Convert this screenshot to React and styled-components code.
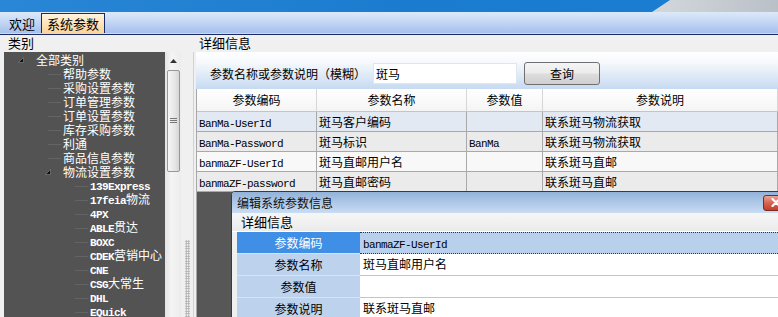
import React from "react";
import styled, { createGlobalStyle } from "styled-components";

const GlobalStyle = createGlobalStyle`
  html, body { margin: 0; padding: 0; }
  body {
    background: #f0f0f0;
    font-family: "Noto Sans CJK SC", "Noto Sans", sans-serif;
    font-size: 12px;
    color: #000;
    overflow: hidden;
  }
`;

const Latin = styled.span`
  font-family: "Liberation Mono", monospace;
  font-size: 11px;
  letter-spacing: -0.6px;
  font-weight: ${({ $bold }) => ($bold ? 700 : 400)};
`;

// split ascii runs so they get the narrow monospaced face
const Txt = ({ children, bold }) =>
  String(children)
    .split(/([\x21-\x7e]+)/)
    .map((part, i) =>
      /^[\x21-\x7e]+$/.test(part) ? (
        <Latin key={i} $bold={bold}>
          {part}
        </Latin>
      ) : (
        part
      )
    );

const tree = [
  { label: "全部类别", level: 0, open: true },
  { label: "帮助参数", level: 1 },
  { label: "采购设置参数", level: 1 },
  { label: "订单管理参数", level: 1 },
  { label: "订单设置参数", level: 1 },
  { label: "库存采购参数", level: 1 },
  { label: "利通", level: 1 },
  { label: "商品信息参数", level: 1 },
  { label: "物流设置参数", level: 1, open: true },
  { label: "139Express", level: 2 },
  { label: "17feia物流", level: 2 },
  { label: "4PX", level: 2 },
  { label: "ABLE贯达", level: 2 },
  { label: "BOXC", level: 2 },
  { label: "CDEK营销中心", level: 2 },
  { label: "CNE", level: 2 },
  { label: "CSG大常生", level: 2 },
  { label: "DHL", level: 2 },
  { label: "EQuick", level: 2 },
];

const rows = [
  { code: "BanMa-UserId", name: "斑马客户编码", value: "", desc: "联系斑马物流获取", bg: "#e2e9f3" },
  { code: "BanMa-Password", name: "斑马标识", value: "BanMa", desc: "联系斑马物流获取", bg: "#ebebeb" },
  { code: "banmaZF-UserId", name: "斑马直邮用户名", value: "", desc: "联系斑马直邮", bg: "#f8f8f8" },
  { code: "banmaZF-password", name: "斑马直邮密码", value: "", desc: "联系斑马直邮", bg: "#ebebeb" },
];

const props = [
  { label: "参数编码", value: "banmaZF-UserId", selected: true },
  { label: "参数名称", value: "斑马直邮用户名" },
  { label: "参数值", value: "" },
  { label: "参数说明", value: "联系斑马直邮" },
];

const App = () => {
  return (
    <Page>
      <GlobalStyle />
      <Banner>
        <BannerBlue />
        <BannerGray />
      </Banner>
      <TabBar>
        <Tab>欢迎</Tab>
        <Tab $active>系统参数</Tab>
      </TabBar>
      <Body>
        <LeftCol>
          <SectionLabel>类别</SectionLabel>
          <TreeWrap>
            <Tree>
              {tree.map((t, i) => (
                <TreeRow key={i} $level={t.level}>
                  <Toggle>
                    {t.open ? (
                      <svg width="6" height="6" viewBox="0 0 6 6">
                        <polygon
                          points="5.5,0.5 5.5,5.5 0.5,5.5"
                          fill="#111"
                          stroke="#8a8a8a"
                          strokeWidth="0.6"
                        />
                      </svg>
                    ) : (
                      <Connector />
                    )}
                  </Toggle>
                  <TreeText>
                    <Txt bold>{t.label}</Txt>
                  </TreeText>
                </TreeRow>
              ))}
            </Tree>
            <Scrollbar>
              <svg width="7" height="4" viewBox="0 0 7 4">
                <polygon points="3.5,0 7,4 0,4" fill="#333" />
              </svg>
              <Thumb>
                <svg width="7" height="6" viewBox="0 0 7 6">
                  <path d="M0 0.5h7M0 2.5h7M0 4.5h7" stroke="#777" strokeWidth="1" />
                </svg>
              </Thumb>
            </Scrollbar>
          </TreeWrap>
        </LeftCol>
        <Splitter>
          <Grip />
        </Splitter>
        <RightCol>
          <SectionLabel>详细信息</SectionLabel>
          <Panel>
            <Content>
              <SearchBar>
                <SearchLabel>参数名称或参数说明（模糊）</SearchLabel>
                <SearchInput readOnly value="斑马" />
                <SearchButton>查询</SearchButton>
              </SearchBar>
              <Grid>
                <GridRow $header>
                  <HeadCell>参数编码</HeadCell>
                  <HeadCell>参数名称</HeadCell>
                  <HeadCell>参数值</HeadCell>
                  <HeadCell>参数说明</HeadCell>
                </GridRow>
                {rows.map((r, i) => (
                  <GridRow key={i} style={{ background: r.bg }}>
                    <Cell><Txt>{r.code}</Txt></Cell>
                    <Cell><Txt>{r.name}</Txt></Cell>
                    <Cell><Txt>{r.value}</Txt></Cell>
                    <Cell><Txt>{r.desc}</Txt></Cell>
                  </GridRow>
                ))}
              </Grid>
              <GridEmpty />
              <Dialog>
                <TitleBar>
                  <Title>编辑系统参数信息</Title>
                  <CloseButton>
                    <svg width="10" height="9" viewBox="0 0 10 9">
                      <path d="M1.5 1l7 7M8.5 1l-7 7" stroke="#fff" strokeWidth="2.2" strokeLinecap="round" />
                    </svg>
                  </CloseButton>
                </TitleBar>
                <GroupLabel>详细信息</GroupLabel>
                <PropGrid>
                  {props.map((p, i) => (
                    <PropRow key={i}>
                      <PropLabel $selected={p.selected}>{p.label}</PropLabel>
                      <PropValue $selected={p.selected}>
                        <Txt>{p.value}</Txt>
                      </PropValue>
                    </PropRow>
                  ))}
                </PropGrid>
              </Dialog>
            </Content>
          </Panel>
        </RightCol>
      </Body>
    </Page>
  );
};

const Page = styled.div`
  width: 778px;
  height: 317px;
  display: flex;
  flex-direction: column;
  overflow: hidden;
`;

const Banner = styled.div`
  height: 12px;
  display: flex;
  flex-shrink: 0;
`;
const BannerBlue = styled.div`
  flex: 1;
  background: linear-gradient(90deg, #2a86d6, #1b7ccf 60%, #1a7dd2);
  margin-right: -18px;
  clip-path: polygon(0 0, 100% 0, calc(100% - 18px) 100%, 0 100%);
  position: relative;
  z-index: 1;
`;
const BannerGray = styled.div`
  width: 126px;
  background: linear-gradient(90deg, #d4d8dc, #b9c0c7);
`;

const TabBar = styled.div`
  height: 21px;
  flex-shrink: 0;
  display: flex;
  align-items: flex-end;
  padding-left: 4px;
  background: linear-gradient(#dde9fa, #c2d6f4 50%, #a5c0ec);
  border-bottom: 1px solid #f4d6a6;
  box-shadow: 0 1px 0 #1b2a66;
  margin-bottom: 1px;
`;
const Tab = styled.div`
  height: 19px;
  line-height: 19px;
  padding: 0 5px;
  margin-right: 1px;
  font-size: 13px;
  box-sizing: border-box;
  ${({ $active }) =>
    $active &&
    `
    height: 20px;
    border: 1px solid #1b2a66;
    border-bottom: none;
    background: linear-gradient(#fff3de, #fde3b8 55%, #fbd49a);
  `}
`;

const Body = styled.div`
  flex: 1;
  display: flex;
  min-height: 0;
`;

const LeftCol = styled.div`
  width: 183px;
  display: flex;
  flex-direction: column;
`;
const SectionLabel = styled.div`
  height: 17px;
  line-height: 15px;
  padding-left: 8px;
  font-size: 13px;
  flex-shrink: 0;
`;
const TreeWrap = styled.div`
  flex: 1;
  display: flex;
  margin-left: 4px;
  width: 177px;
  min-height: 0;
`;
const Tree = styled.div`
  flex: 1;
  background: #535353;
  overflow: hidden;
  color: #fff;
  padding-top: 1px;
`;
const TreeRow = styled.div`
  height: 14px;
  display: flex;
  align-items: center;
  padding-left: ${({ $level }) => $level * 27 + 14}px;
  white-space: nowrap;
`;
const Toggle = styled.div`
  width: 18px;
  height: 14px;
  display: flex;
  align-items: center;
  flex-shrink: 0;
`;
const Connector = styled.div`
  margin-left: 3px;
  width: 13px;
  border-top: 1px solid #646464;
`;
const TreeText = styled.span`
  line-height: 14px;
  font-size: 12px;
`;

const Scrollbar = styled.div`
  width: 16px;
  background: linear-gradient(90deg, #e4e4e4, #f4f4f4 40%, #ececec);
  display: flex;
  flex-direction: column;
  align-items: center;
  padding-top: 7px;
  box-sizing: border-box;
`;
const Thumb = styled.div`
  margin-top: 7px;
  width: 13px;
  height: 102px;
  box-sizing: border-box;
  border: 1px solid #979797;
  border-radius: 2px;
  background: linear-gradient(90deg, #f6f6f6, #e6e6e6 60%, #d6d6d6);
  display: flex;
  align-items: center;
  justify-content: center;
`;

const Splitter = styled.div`
  width: 8px;
  display: flex;
  flex-direction: column;
  padding: 205px 1px 0 2px;
  box-sizing: border-box;
`;
const Grip = styled.div`
  flex: 1;
  background: radial-gradient(circle, #a8a8a8 0.8px, transparent 1.1px) 0 0 / 2.5px 2.5px;
`;

const RightCol = styled.div`
  flex: 1;
  display: flex;
  flex-direction: column;
  min-width: 0;
`;
const Panel = styled.div`
  flex: 1;
  display: flex;
  margin-left: 2px;
  border-left: 1px solid #d2d2d2;
  padding-left: 2px;
  min-height: 0;
`;
const Content = styled.div`
  flex: 1;
  position: relative;
  display: flex;
  flex-direction: column;
  min-width: 0;
`;

const SearchBar = styled.div`
  height: 37px;
  flex-shrink: 0;
  display: flex;
  align-items: center;
  padding: 6px 0 0 14px;
  box-sizing: border-box;
  background: linear-gradient(#ffffff, #f5f8fc 30%, #c6daf1);
`;
const SearchLabel = styled.span`
  font-size: 12px;
  width: 163px;
  white-space: nowrap;
`;
const SearchInput = styled.input`
  width: 144px;
  height: 21px;
  box-sizing: border-box;
  border: 1px solid #dfe6ee;
  padding: 0 2px;
  font-family: "Noto Sans CJK SC", sans-serif;
  font-size: 12px;
  background: #fff;
  outline: none;
`;
const SearchButton = styled.button`
  margin-left: 7px;
  width: 76px;
  height: 23px;
  border: 1px solid #707070;
  border-radius: 3px;
  background: linear-gradient(#f4f4f4, #ececec 48%, #dddddd 52%, #cfcfcf);
  font-family: "Noto Sans CJK SC", sans-serif;
  font-size: 12px;
  padding: 0;
`;

const Grid = styled.div`
  border-left: 1px solid #a7a7a7;
  flex-shrink: 0;
`;
const GridRow = styled.div`
  display: grid;
  grid-template-columns: 120px 150px 76px 1fr;
  height: ${({ $header }) => ($header ? 23 : 20)}px;
  box-sizing: border-box;
  border-bottom: 1px solid ${({ $header }) => ($header ? "#c4c4c4" : "#a9a9a9")};
  background: ${({ $header }) => ($header ? "linear-gradient(#ffffff, #f4f4f4)" : "#fff")};
`;
const HeadCell = styled.div`
  border-right: 1px solid #d6d6d6;
  text-align: center;
  line-height: 22px;
  font-size: 12px;
  white-space: nowrap;
`;
const Cell = styled.div`
  border-right: 1px solid #a9a9a9;
  padding-left: 2px;
  line-height: 19px;
  font-size: 12px;
  white-space: nowrap;
  overflow: hidden;
`;
const GridEmpty = styled.div`
  flex: 1;
  background: #575757;
  border-left: 1px solid #a7a7a7;
`;

const Dialog = styled.div`
  position: absolute;
  left: 35px;
  top: 139px;
  bottom: -4px;
  width: 560px;
  background: #f0f0f0;
  border: 1px solid #3a3a3a;
  border-top-left-radius: 4px;
  display: flex;
  flex-direction: column;
  overflow: hidden;
`;
const TitleBar = styled.div`
  height: 21px;
  flex-shrink: 0;
  display: flex;
  align-items: center;
  justify-content: space-between;
  padding-left: 5px;
  background: linear-gradient(#92b2d9, #aec8e7 50%, #c9dcf2);
`;
const Title = styled.span`
  font-size: 12px;
  color: #111;
`;
const CloseButton = styled.div`
  width: 26px;
  height: 16px;
  margin-right: 3px;
  box-sizing: border-box;
  border: 1px solid #7b2b22;
  border-radius: 3px;
  background: linear-gradient(#eaa596, #d8634e 50%, #c1402c);
  display: flex;
  align-items: center;
  justify-content: center;
`;
const GroupLabel = styled.div`
  height: 18px;
  flex-shrink: 0;
  line-height: 17px;
  padding-left: 9px;
  font-size: 13px;
  background: linear-gradient(#f6f6f6, #ebebeb);
  border-bottom: 1px solid #ffffff;
`;
const PropGrid = styled.div`
  margin-left: 5px;
  flex: 1;
  display: flex;
  flex-direction: column;
`;
const PropRow = styled.div`
  display: flex;
  height: 22px;
  flex-shrink: 0;
`;
const PropLabel = styled.div`
  width: 123px;
  flex-shrink: 0;
  text-align: center;
  line-height: 21px;
  font-size: 12px;
  box-sizing: border-box;
  border-bottom: 1px solid #d6e3f2;
  background: ${({ $selected }) => ($selected ? "#3f8fe6" : "#bdd3ed")};
  color: ${({ $selected }) => ($selected ? "#fff" : "#000")};
`;
const PropValue = styled.div`
  flex: 1;
  padding-left: 3px;
  line-height: 20px;
  font-size: 12px;
  box-sizing: border-box;
  white-space: nowrap;
  ${({ $selected }) =>
    $selected
      ? `
    background: #b8d0ec;
    border-top: 1px dotted #333;
    border-bottom: 1px dotted #333;
  `
      : `
    background: #fff;
    border-bottom: 1px solid #b4cad9;
  `}
`;

export default App;
